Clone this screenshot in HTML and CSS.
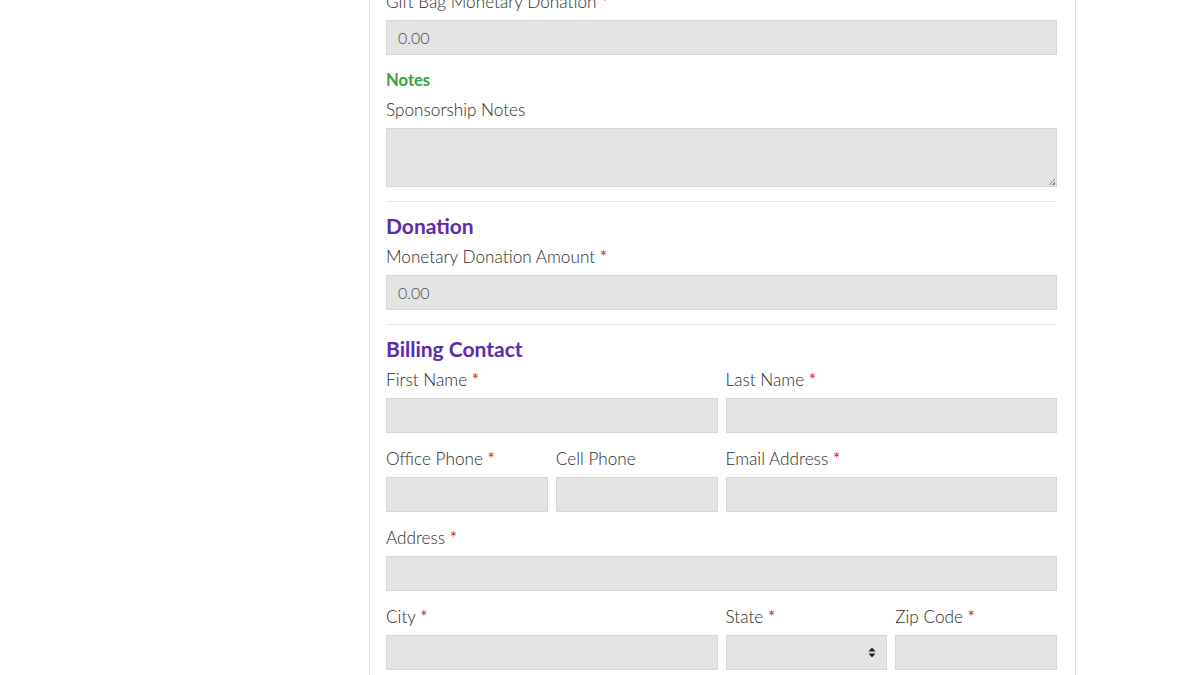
FILE: index.html
```html
<!DOCTYPE html>
<html>
<head>
<meta charset="utf-8">
<link rel="stylesheet" href="styles.css">
</head>
<body>
<div class="page">
  <div class="side"></div>
  <main class="panel">
    <div class="field">
      <label class="lbl">Gift Bag Monetary Donation <span class="req">*</span></label>
      <div class="input">0.00</div>
    </div>
    <div class="notes-title">Notes</div>
    <div class="field">
      <label class="lbl">Sponsorship Notes</label>
      <div class="input textarea"><span class="grip"></span></div>
    </div>
    <hr class="rule">
    <h2 class="section">Donation</h2>
    <div class="field">
      <label class="lbl">Monetary Donation Amount <span class="req">*</span></label>
      <div class="input">0.00</div>
    </div>
    <hr class="rule">
    <h2 class="section">Billing Contact</h2>
    <div class="grid">
      <div class="field span2">
        <label class="lbl">First Name <span class="req">*</span></label>
        <div class="input"></div>
      </div>
      <div class="field span2">
        <label class="lbl">Last Name <span class="req">*</span></label>
        <div class="input"></div>
      </div>
      <div class="field">
        <label class="lbl">Office Phone <span class="req">*</span></label>
        <div class="input"></div>
      </div>
      <div class="field">
        <label class="lbl">Cell Phone</label>
        <div class="input"></div>
      </div>
      <div class="field span2">
        <label class="lbl">Email Address <span class="req">*</span></label>
        <div class="input"></div>
      </div>
      <div class="field span4">
        <label class="lbl">Address <span class="req">*</span></label>
        <div class="input"></div>
      </div>
      <div class="field span2">
        <label class="lbl">City <span class="req">*</span></label>
        <div class="input"></div>
      </div>
      <div class="field">
        <label class="lbl">State <span class="req">*</span></label>
        <div class="input select">
          <svg class="caret" width="8" height="11" viewBox="0 0 8 11"><path d="M4 0.5 L7.5 4.5 H0.5 Z M4 10.5 L7.5 6.5 H0.5 Z" fill="#222"/></svg>
        </div>
      </div>
      <div class="field">
        <label class="lbl">Zip Code <span class="req">*</span></label>
        <div class="input"></div>
      </div>
    </div>
  </main>
</div>
</body>
</html>
```
FILE: styles.css
```css
html, body {
  margin: 0;
  padding: 0;
  background: #fff;
  overflow: hidden;
}
body {
  font-family: Lato, "Noto Sans", sans-serif;
  color: #333;
}
.page {
  display: flex;
  margin-top: -10px;
}
.side {
  width: 369px;
  flex: none;
}
.panel {
  width: 671px;
  padding: 0 18px 40px 16px;
  border-left: 1px solid #e3e3e3;
  border-right: 1px solid #e3e3e3;
  min-height: 720px;
}
.field {
  display: flex;
  flex-direction: column;
  margin-bottom: 14px;
}
.lbl {
  font-size: 17.2px;
  font-weight: 300;
  line-height: 24px;
  height: 24px;
  color: #2b2b2b;
  margin-bottom: 6px;
  white-space: nowrap;
}
.req {
  color: #e0202f;
  font-weight: 400;
}
.input {
  box-sizing: border-box;
  height: 35px;
  background: #e4e4e4;
  border: 1px solid #d6d6d6;
  padding: 0 11px;
  font-size: 16px;
  font-weight: 300;
  color: #4a4a4a;
  line-height: 33px;
  position: relative;
}
.textarea {
  height: 59px;
}
.grip {
  position: absolute;
  right: 1px;
  bottom: 1px;
  width: 6px;
  height: 6px;
  background: linear-gradient(135deg, transparent 45%, #888 45%, #888 58%, transparent 58%, transparent 72%, #888 72%);
}
.notes-title {
  font-size: 16.6px;
  font-weight: 700;
  color: #3aa53a;
  line-height: 23px;
  margin-bottom: 6px;
}
.rule {
  border: 0;
  border-top: 1px solid #e6e6e6;
  margin: 1px 0 10px;
}
.section {
  margin: 0 0 5px;
  font-size: 21px;
  font-weight: 700;
  line-height: 28px;
  color: #5a2bab;
}
.grid {
  display: grid;
  grid-template-columns: repeat(4, 1fr);
  column-gap: 8px;
}
.span2 { grid-column: span 2; }
.span4 { grid-column: span 4; }
.select .caret {
  position: absolute;
  right: 10px;
  top: 11px;
}
```
